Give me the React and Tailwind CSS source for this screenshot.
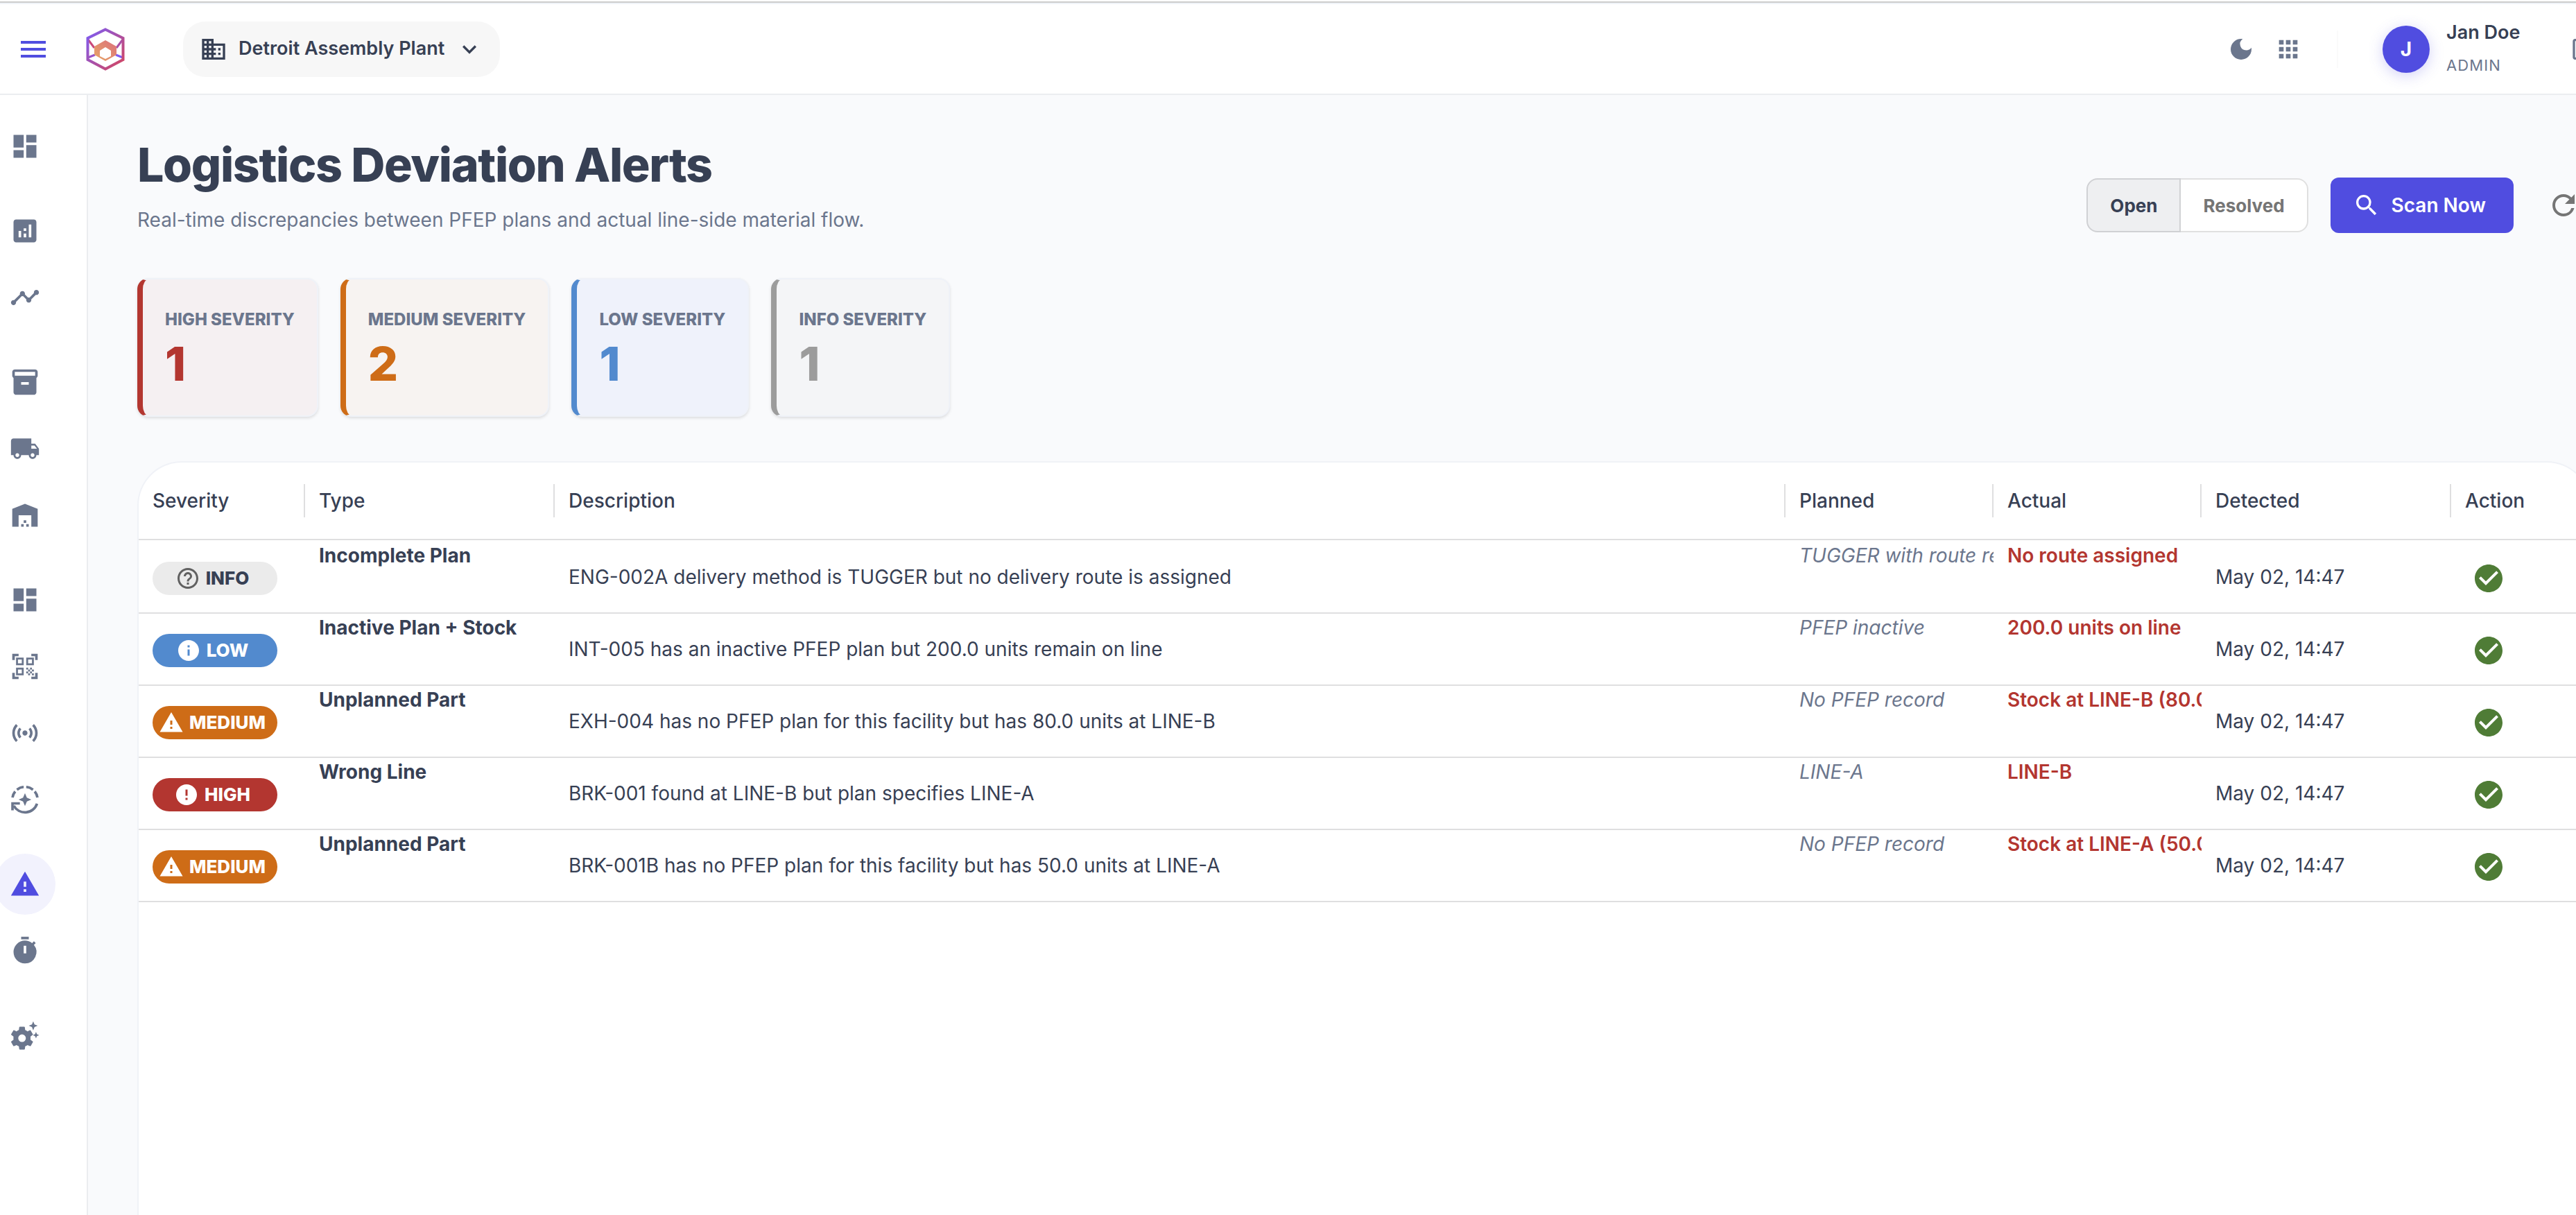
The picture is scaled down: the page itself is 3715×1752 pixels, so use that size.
import React, { useState } from 'react';
import {
  MdMenu,
  MdBusiness,
  MdKeyboardArrowDown,
  MdDarkMode,
  MdApps,
  MdLogout,
  MdDashboard,
  MdAnalytics,
  MdTimeline,
  MdLocalShipping,
  MdWarehouse,
  MdSensors,
  MdWarning,
  MdSearch,
  MdRefresh,
  MdCheckCircle,
  MdInfo,
  MdError,
  MdHelpOutline,
  MdTimer,
} from 'react-icons/md';

const InventoryIcon = (props) => (
  <svg viewBox="0 0 24 24" fill="currentColor" {...props}>
    <path d="M20 2H4c-1 0-2 .9-2 2v3.01c0 .72.43 1.34 1 1.69V20c0 1.1 1.1 2 2 2h14c.9 0 2-.9 2-2V8.7c.57-.35 1-.97 1-1.69V4c0-1.1-1-2-2-2zm-5 12H9v-2h6v2zm5-7H4V4h16v3z" />
  </svg>
);

const QrScannerIcon = (props) => (
  <svg viewBox="0 0 24 24" fill="currentColor" {...props}>
    <path d="M9.5 6.5v3h-3v-3h3M11 5H5v6h6V5zm-1.5 9.500v3h-3v-3h3M11 13H5v6h6v-6zm6.500-6.500v3h-3v-3h3M19 5h-6v6h6V5zm-6 8h1.500v1.500H13V13zm1.500 1.500H16V16h-1.500v-1.500zM16 13h1.500v1.500H16V13zm-3 3h1.500v1.500H13V16zm1.500 1.500H16V19h-1.500v-1.500zM16 16h1.500v1.500H16V16zm1.500-1.500H19V16h-1.500v-1.500zm0 3H19V19h-1.500v-1.500zM22 7h-2V4h-3V2h5v5zm0 15v-5h-2v3h-3v2h5zM2 22h5v-2H4v-3H2v5zM2 2v5h2V4h3V2H2z" />
  </svg>
);

// dashed upper arc, solid lower arc with an arrow head, star in the middle
const ModeIcon = (props) => (
  <svg viewBox="0 0 24 24" fill="none" {...props}>
    <g stroke="currentColor" strokeWidth="2">
      <path d="M2.200 10.400A10 10 0 0 1 4.300 5.600" />
      <path d="M5.700 4.200A10 10 0 0 1 11 2.050" />
      <path d="M13 2.050A10 10 0 0 1 18.300 4.200" />
      <path d="M19.700 5.600A10 10 0 0 1 21.800 10.400" />
      <path d="M21.500 15.200A10 10 0 0 1 3.200 16.800" />
      <path d="M2.200 20.500V15H8" />
    </g>
    <path fill="currentColor" d="M12 7l1.500 3.500L17 12l-3.500 1.500L12 17l-1.500-3.500L7 12l3.500-1.500z" />
  </svg>
);

const GearSparkIcon = (props) => (
  <svg viewBox="0 0 24 24" fill="currentColor" {...props}>
    <path
      fillRule="evenodd"
      d="M16.400 14.200c0-.4 0-.8-.05-1.200l1.750-1.350c.2-.15.25-.4.1-.6l-1.700-2.900c-.1-.2-.35-.3-.55-.2l-2 .85c-.6-.45-1.100-.8-1.800-1.050L11.900 5.600c-.05-.25-.25-.4-.5-.4H8c-.25 0-.45.15-.5.400L7.200 7.750c-.65.25-1.250.6-1.800 1.050l-2-.85c-.2-.1-.45 0-.55.200l-1.700 2.900c-.1.200-.1.450.1.600L3 13c-.1.800-.1 1.600 0 2.400l-1.750 1.350c-.2.150-.2.400-.1.600l1.700 2.900c.1.200.35.300.55.200l2-.85c.55.450 1.150.8 1.800 1.050l.3 2.150c.05.250.25.400.5.400h3.400c.25 0 .45-.15.5-.400l.3-2.150c.65-.25 1.250-.6 1.800-1.050l2 .85c.2.100.45 0 .55-.200l1.700-2.900c.1-.2.100-.450-.1-.600L16.350 15.400zM9.700 17.200a3 3 0 1 1 0-6 3 3 0 0 1 0 6z"
    />
    <path d="M18.500 1l1 2.400L22 4.400l-2.500 1L18.500 8l-1-2.600-2.500-1 2.500-1zM20.700 9.300l.7 1.700 1.800.8-1.800.8-.7 1.700-.8-1.700-1.700-.8 1.700-.8z" />
  </svg>
);

const Logo = () => (
  <svg viewBox="0 0 56 62" className="h-[62px] w-14" fill="none" aria-label="Logo">
    <defs>
      <linearGradient id="frame" x1="0" y1="0" x2="1" y2="1">
        <stop offset="0" stopColor="#7c5cf5" />
        <stop offset="1" stopColor="#d6455c" />
      </linearGradient>
      <linearGradient id="core" x1="1" y1="0" x2="0" y2="1">
        <stop offset="0" stopColor="#db6f7c" />
        <stop offset="1" stopColor="#e8a765" />
      </linearGradient>
    </defs>
    <path d="M3 17l9 12" stroke="#c9487c" strokeWidth="3" />
    <path d="M53 17l-9 12" stroke="#a950a8" strokeWidth="3" />
    <path d="M3 43l10-4" stroke="#9a55c8" strokeWidth="3" />
    <path d="M53 43l-10-4" stroke="#7c5cf5" strokeWidth="3" />
    <path d="M28 2.500L53.500 15v31L28 59.500 2.500 46V15z" stroke="url(#frame)" strokeWidth="4" />
    <path
      d="M28 18l16 9v12L28 48 12 39V27zm0 10l-8 5v8l8 4 8-4v-8z"
      fill="url(#core)"
      fillRule="evenodd"
    />
  </svg>
);

const navGroups = [
  [{ label: 'Dashboard', icon: MdDashboard }],
  [
    { label: 'Analytics', icon: MdAnalytics },
    { label: 'Trends', icon: MdTimeline },
  ],
  [
    { label: 'Inventory', icon: InventoryIcon },
    { label: 'Shipping', icon: MdLocalShipping },
    { label: 'Warehouse', icon: MdWarehouse },
  ],
  [
    { label: 'Board', icon: MdDashboard },
    { label: 'Scanner', icon: QrScannerIcon },
    { label: 'Sensors', icon: MdSensors },
    { label: 'Replenishment', icon: ModeIcon },
  ],
  [
    { label: 'Deviation Alerts', icon: MdWarning, active: true },
    { label: 'Timers', icon: MdTimer },
  ],
  [{ label: 'Settings', icon: GearSparkIcon }],
];

const summary = [
  { label: 'HIGH SEVERITY', count: 1, card: 'border-l-[#b33630] bg-[#f5f0f2]', text: 'text-[#b33630]' },
  { label: 'MEDIUM SEVERITY', count: 2, card: 'border-l-[#ce6c17] bg-[#f7f3f1]', text: 'text-[#ce6c17]' },
  { label: 'LOW SEVERITY', count: 1, card: 'border-l-[#528ace] bg-[#eff2fb]', text: 'text-[#528ace]' },
  { label: 'INFO SEVERITY', count: 1, card: 'border-l-[#9c9c9c] bg-[#f4f5f7]', text: 'text-[#9c9c9c]' },
];

const severities = {
  INFO: { icon: MdHelpOutline, chip: 'bg-[#ebebeb] text-[#374054]', iconColor: 'text-[#616161]' },
  LOW: { icon: MdInfo, chip: 'bg-[#528ace] text-white', iconColor: 'text-white' },
  MEDIUM: { icon: MdWarning, chip: 'bg-[#ce6c17] text-white', iconColor: 'text-white' },
  HIGH: { icon: MdError, chip: 'bg-[#b33630] text-white', iconColor: 'text-white' },
};

const alerts = [
  {
    severity: 'INFO',
    type: 'Incomplete Plan',
    description: 'ENG-002A delivery method is TUGGER but no delivery route is assigned',
    planned: 'TUGGER with route required',
    actual: 'No route assigned',
    detected: 'May 02, 14:47',
  },
  {
    severity: 'LOW',
    type: 'Inactive Plan + Stock',
    description: 'INT-005 has an inactive PFEP plan but 200.0 units remain on line',
    planned: 'PFEP inactive',
    actual: '200.0 units on line',
    detected: 'May 02, 14:47',
  },
  {
    severity: 'MEDIUM',
    type: 'Unplanned Part',
    description: 'EXH-004 has no PFEP plan for this facility but has 80.0 units at LINE-B',
    planned: 'No PFEP record',
    actual: 'Stock at LINE-B (80.0 units)',
    detected: 'May 02, 14:47',
  },
  {
    severity: 'HIGH',
    type: 'Wrong Line',
    description: 'BRK-001 found at LINE-B but plan specifies LINE-A',
    planned: 'LINE-A',
    actual: 'LINE-B',
    detected: 'May 02, 14:47',
  },
  {
    severity: 'MEDIUM',
    type: 'Unplanned Part',
    description: 'BRK-001B has no PFEP plan for this facility but has 50.0 units at LINE-A',
    planned: 'No PFEP record',
    actual: 'Stock at LINE-A (50.0 units)',
    detected: 'May 02, 14:47',
  },
];

const columns = ['Severity', 'Type', 'Description', 'Planned', 'Actual', 'Detected', 'Action'];

const Header = () => (
  <header className="-mr-8 flex h-[131px] shrink-0 items-center border-b-2 border-[#ebedf0] bg-white pl-6">
    <button aria-label="Toggle menu" className="text-[#504de0]">
      <MdMenu className="size-12" />
    </button>
    <a href="#home" className="ml-[52px]">
      <Logo />
    </a>
    <button className="ml-[84px] flex h-20 items-center gap-4 rounded-4xl bg-[#f7f7f7] px-6 text-[27px] font-semibold text-[#374054]">
      <MdBusiness className="size-10" />
      Detroit Assembly Plant
      <MdKeyboardArrowDown className="size-10" />
    </button>

    <div className="ml-auto flex items-center text-[#6b768d]">
      <button aria-label="Dark mode" className="mr-7">
        <MdDarkMode className="size-10" />
      </button>
      <button aria-label="Apps">
        <MdApps className="size-10" />
      </button>
      <div className="mr-16 ml-[50px] h-[54px] w-0.5 bg-[#fafafa]" />
      <div className="flex size-[68px] items-center justify-center rounded-full bg-[#504de0] text-[28px] font-bold text-white shadow-[0_4px_20px_rgba(80,77,224,0.25)]">
        J
      </div>
      <div className="ml-6 w-[179px] pb-1">
        <p className="text-[27px] leading-[50px] font-semibold text-[#374054]">Jan Doe</p>
        <p className="text-[22px] leading-11 tracking-wider">ADMIN</p>
      </div>
      <button aria-label="Log out">
        <MdLogout className="size-10" />
      </button>
    </div>
  </header>
);

const Sidebar = () => (
  <nav className="w-[127px] shrink-0 border-r-2 border-[#ebedf0] bg-white pt-[30px]">
    {navGroups.map((group, i) => (
      <ul key={i} className="mb-[34px] -ml-2 flex flex-col gap-2">
        {group.map(({ label, icon: Icon, active }) => (
          <li key={label}>
            <a
              href="#nav"
              aria-label={label}
              className={`flex size-[88px] items-center justify-center rounded-full ${
                active ? 'bg-[#f2f2fd] text-[#504de0]' : 'text-[#6b768d]'
              }`}
            >
              <Icon className="size-11" />
            </a>
          </li>
        ))}
      </ul>
    ))}
  </nav>
);

const SeverityChip = ({ severity }) => {
  const { icon: Icon, chip, iconColor } = severities[severity];
  return (
    <span
      className={`flex h-12 w-[180px] items-center justify-center gap-2 rounded-full pr-2 text-[26px] font-extrabold ${chip}`}
    >
      <Icon className={`size-9 ${iconColor}`} />
      {severity}
    </span>
  );
};

const AlertsTable = () => (
  <table className="w-full table-fixed border-separate border-spacing-0 text-left text-[28px] leading-10 text-[#374054]">
    <colgroup>
      <col className="w-[240px]" />
      <col className="w-[360px]" />
      <col />
      <col className="w-[300px]" />
      <col className="w-[300px]" />
      <col className="w-[360px]" />
      <col className="w-[200px]" />
    </colgroup>
    <thead>
      <tr>
        {columns.map((name) => (
          <th key={name} className="group h-28 border-b-2 border-[#dfdfe0] p-0 font-medium">
            <div className="flex h-12 items-center border-r-2 border-[#dfdfe0] pl-5 group-last:border-r-0">
              {name}
            </div>
          </th>
        ))}
      </tr>
    </thead>
    <tbody className="*:first:h-[106px] [&_td]:border-b-2 [&_td]:border-[#dfdfe0] [&_td]:p-0 [&_td]:align-bottom [&_td>div]:flex [&_td>div]:h-[102px] [&_td>div]:overflow-hidden [&_td>div]:pl-5 [&_td>div]:whitespace-nowrap">
      {alerts.map((a, i) => (
        <tr key={i}>
          <td>
            <div className="items-center pt-1">
              <SeverityChip severity={a.severity} />
            </div>
          </td>
          <td>
            <div className="font-bold">{a.type}</div>
          </td>
          <td>
            <div className="items-center">{a.description}</div>
          </td>
          <td>
            <div className="text-[#6b768d] italic">{a.planned}</div>
          </td>
          <td>
            <div className="font-semibold text-[#b33630]">{a.actual}</div>
          </td>
          <td>
            <div className="items-center">{a.detected}</div>
          </td>
          <td>
            <div className="items-center pt-1">
              <button aria-label="Resolve alert" className="p-2.5 text-[#4f7c36]">
                <MdCheckCircle className="size-12" />
              </button>
            </div>
          </td>
        </tr>
      ))}
    </tbody>
  </table>
);

const App = () => {
  const [tab, setTab] = useState('Open');

  return (
    <div className="flex h-screen flex-col overflow-hidden bg-white font-['Inter',sans-serif]">
      <div className="mt-0.5 h-0.5 shrink-0 bg-[#cccccc]" />
      <div className="flex min-h-0 flex-1 flex-col border-t-2 border-[#f0f4f9]">
        <Header />
        <div className="flex min-h-0 flex-1">
          <Sidebar />
          {/* content runs past the right edge of the window */}
          <main className="-mr-[22px] flex min-w-0 flex-1 flex-col bg-[#f9fafc] pl-[71px]">
            <div className="flex items-start pt-[60px]">
              <div>
                <h1 className="text-[68px] leading-20 font-extrabold tracking-[-0.02em] text-[#374054]">
                  Logistics Deviation Alerts
                </h1>
                <p className="mt-5 text-[28px] leading-10 text-[#6b768d]">
                  Real-time discrepancies between PFEP plans and actual line-side material flow.
                </p>
              </div>
              <div className="mt-[59px] ml-auto flex items-center">
                <div className="flex h-[78px] text-[26px] font-bold">
                  {['Open', 'Resolved'].map((name) => (
                    <button
                      key={name}
                      onClick={() => setTab(name)}
                      className={`border-2 px-8 first:rounded-l-2xl last:rounded-r-2xl last:border-l-0 ${
                        tab === name
                          ? 'border-[#d0d1d4] bg-[#eeeff1] text-[#374054]'
                          : 'border-[#e0e0e0] bg-white text-[#757575]'
                      }`}
                    >
                      {name}
                    </button>
                  ))}
                </div>
                <button className="ml-8 flex h-20 items-center gap-4 rounded-xl bg-[#504de0] pr-10 pl-8 text-[28px] font-semibold text-white">
                  <MdSearch className="size-10" />
                  Scan Now
                </button>
                <button aria-label="Refresh" className="ml-8 p-4 text-[#757575]">
                  <MdRefresh className="size-12" />
                </button>
              </div>
            </div>

            <div className="mt-16 flex gap-8">
              {summary.map(({ label, count, card, text }) => (
                <div
                  key={label}
                  className={`rounded-2xl border-2 border-l-8 border-[#eff2f8] px-8 pt-10 pb-[30px] shadow-[0_2px_4px_rgba(0,0,0,0.12)] ${card}`}
                >
                  <p className="text-[24px] leading-9 font-extrabold text-[#6b768d]">{label}</p>
                  <p className={`text-[68px] leading-[90px] font-extrabold ${text}`}>{count}</p>
                </div>
              ))}
            </div>

            <section className="mt-16 flex-1 overflow-hidden rounded-t-[64px] border-x-2 border-t-2 border-[#f0f2f7] bg-white">
              <AlertsTable />
            </section>
          </main>
        </div>
      </div>
    </div>
  );
};

export default App;
